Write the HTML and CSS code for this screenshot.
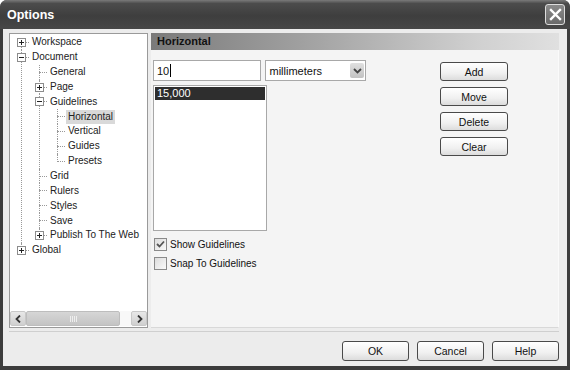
FILE: index.html
```html
<!DOCTYPE html>
<html>
<head>
    <link rel="stylesheet" href="styles.css">
</head>
<body>
    <div class="window">
        <div class="titlebar">
            <span class="title">Options</span>
            <span class="close">
                <svg width="13" height="13" viewBox="0 0 13 13"><path d="M2 2 L11 11 M11 2 L2 11" stroke="#fff" stroke-width="2.4" stroke-linecap="square"/></svg>
            </span>
        </div>
        <div class="client">
            <div class="main">
                <div class="tree">
                    <div class="tree-list">
                        <ul>
                            <li><div class="node"><span class="box plus"></span><span class="lbl">Workspace</span></div></li>
                            <li><div class="node"><span class="box"></span><span class="lbl">Document</span></div>
                                <ul>
                                    <li><div class="node"><span class="lbl">General</span></div></li>
                                    <li><div class="node"><span class="box plus"></span><span class="lbl">Page</span></div></li>
                                    <li><div class="node"><span class="box"></span><span class="lbl">Guidelines</span></div>
                                        <ul>
                                            <li><div class="node"><span class="lbl selected">Horizontal</span></div></li>
                                            <li><div class="node"><span class="lbl">Vertical</span></div></li>
                                            <li><div class="node"><span class="lbl">Guides</span></div></li>
                                            <li><div class="node"><span class="lbl">Presets</span></div></li>
                                        </ul>
                                    </li>
                                    <li><div class="node"><span class="lbl">Grid</span></div></li>
                                    <li><div class="node"><span class="lbl">Rulers</span></div></li>
                                    <li><div class="node"><span class="lbl">Styles</span></div></li>
                                    <li><div class="node"><span class="lbl">Save</span></div></li>
                                    <li><div class="node"><span class="box plus"></span><span class="lbl">Publish To The Web</span></div></li>
                                </ul>
                            </li>
                            <li><div class="node"><span class="box plus"></span><span class="lbl">Global</span></div></li>
                        </ul>
                    </div>
                    <div class="hscroll">
                        <span class="sbtn"><svg width="7" height="8" viewBox="0 0 7 8"><path d="M5 0.5 L1.5 4 L5 7.5" fill="none" stroke="#333" stroke-width="1.8"/></svg></span>
                        <span class="thumb"><span class="grip"></span></span>
                        <span class="track"></span>
                        <span class="sbtn"><svg width="7" height="8" viewBox="0 0 7 8"><path d="M2 0.5 L5.5 4 L2 7.5" fill="none" stroke="#333" stroke-width="1.8"/></svg></span>
                    </div>
                </div>
                <div class="panel">
                    <div class="panel-head">Horizontal</div>
                    <div class="panel-body">
                        <div class="fields">
                            <div class="row1">
                                <div class="textbox">10<span class="caret"></span></div>
                                <div class="select">millimeters
                                    <span class="dd"><svg width="9" height="6" viewBox="0 0 9 6"><path d="M1 1 L4.5 4.5 L8 1" fill="none" stroke="#444" stroke-width="1.8"/></svg></span>
                                </div>
                            </div>
                            <div class="listbox">
                                <div class="item selected-item">15,000</div>
                            </div>
                            <div class="check"><span class="cb"><svg width="11" height="11" viewBox="0 0 11 11"><path d="M2 5 L4.5 7.5 L9 2.5" fill="none" stroke="#555" stroke-width="1.8"/></svg></span>Show Guidelines</div>
                            <div class="check"><span class="cb"></span>Snap To Guidelines</div>
                        </div>
                        <div class="actions">
                            <button class="btn">Add</button>
                            <button class="btn">Move</button>
                            <button class="btn">Delete</button>
                            <button class="btn">Clear</button>
                        </div>
                    </div>
                </div>
            </div>
            <div class="footer">
                <button class="btn wide">OK</button>
                <button class="btn wide">Cancel</button>
                <button class="btn wide">Help</button>
            </div>
        </div>
    </div>
</body>
</html>
```

FILE: styles.css
```css
body
{
    margin: 0;
    background: #fff;
    font-family: "Liberation Sans", Arial, sans-serif;
    font-size: 10px;
    color: #111;
}
.window
{
    width: 570px;
    height: 370px;
    display: flex;
    flex-direction: column;
    background: #3c3c3c;
    border-radius: 7px 7px 0 0;
}
.titlebar
{
    height: 29px;
    display: flex;
    align-items: center;
    justify-content: space-between;
    padding: 0 5px 0 7px;
    border-radius: 7px 7px 0 0;
    background: linear-gradient(#7a7a7a, #4c4c4c 12%, #3e3e3e 55%, #474747);
}
.title
{
    color: #fff;
    font-weight: bold;
    font-size: 12.5px;
    margin-top: 1px;
}
.close
{
    width: 18px;
    height: 19px;
    border: 1px solid #ddd;
    border-radius: 3px;
    background: linear-gradient(#8a8a8a, #6a6a6a);
    display: flex;
    align-items: center;
    justify-content: center;
}
.client
{
    flex: 1;
    margin: 0 3px 4px 3px;
    background: #ececec;
    padding: 4px 8px 0 6px;
    display: flex;
    flex-direction: column;
}
.main
{
    display: flex;
    gap: 3px;
    height: 295px;
}
.tree
{
    width: 137px;
    border: 1px solid #9a9a9a;
    background: #fff;
    display: flex;
    flex-direction: column;
}
.tree-list
{
    flex: 1;
    padding: 1px 0 0 11px;
}
.tree ul
{
    list-style: none;
    margin: 0;
    padding: 0;
}
.tree ul ul
{
    margin-left: 18px;
}
.tree li
{
    position: relative;
}
.tree li::before
{
    content: '';
    position: absolute;
    left: 0;
    top: 7px;
    width: 8px;
    border-top: 1px dotted #999;
}
.tree li::after
{
    content: '';
    position: absolute;
    left: 0;
    top: 0;
    bottom: 0;
    border-left: 1px dotted #999;
}
.tree li:last-child::after
{
    bottom: auto;
    height: 8px;
}
.tree-list > ul > li:first-child::after
{
    top: 7px;
}
.node
{
    height: 14.85px;
    display: flex;
    align-items: center;
    position: relative;
}
.lbl
{
    margin-left: 9px;
    padding: 0 2px;
    line-height: 14px;
    color: #222;
}
.selected
{
    background: #d9d9d9;
}
.box
{
    position: absolute;
    left: -4px;
    top: 3px;
    width: 7px;
    height: 7px;
    border: 1px solid #8c8c8c;
    z-index: 1;
    background: linear-gradient(#222, #222) center / 5px 1px no-repeat, #fff;
}
.box.plus
{
    background: linear-gradient(#222, #222) center / 5px 1px no-repeat, linear-gradient(#222, #222) center / 1px 5px no-repeat, #fff;
}
.hscroll
{
    height: 15px;
    margin: 0 0 1px 0;
    display: flex;
}
.sbtn
{
    width: 14px;
    border: 1px solid #c8c8c8;
    border-radius: 2px;
    background: linear-gradient(#e8e8e8, #cfcfcf);
    display: flex;
    align-items: center;
    justify-content: center;
}
.thumb
{
    width: 92px;
    border: 1px solid #bdbdbd;
    border-radius: 2px;
    background: linear-gradient(#d6d6d6, #c4c4c4);
    display: flex;
    align-items: center;
    justify-content: center;
}
.grip
{
    width: 7px;
    height: 6px;
    background: repeating-linear-gradient(90deg, #eee 0 1px, transparent 1px 2px);
}
.track
{
    flex: 1;
    background: #f8f8f8;
}
.panel
{
    flex: 1;
    display: flex;
    flex-direction: column;
}
.panel-head
{
    height: 17px;
    line-height: 17px;
    padding-left: 6px;
    font-weight: bold;
    font-size: 11px;
    color: #111;
    background: linear-gradient(90deg, #7a7a7a, #9e9e9e 35%, #d0d0d0 80%, #e0e0e0);
}
.panel-body
{
    flex: 1;
    display: flex;
    background: #f4f4f4;
    padding: 10px 0 0 2px;
    border-right: 1px solid #fafafa;
    border-bottom: 1px solid #d8d8d8;
}
.fields
{
    display: flex;
    flex-direction: column;
    width: 213px;
}
.row1
{
    display: flex;
    gap: 4px;
}
.textbox
{
    width: 104px;
    height: 19px;
    border: 1px solid #a8a8a8;
    background: #fff;
    padding-left: 3px;
    display: flex;
    align-items: center;
    font-size: 11px;
}
.caret
{
    width: 1px;
    height: 13px;
    background: #000;
    margin-left: 1px;
}
.select
{
    width: 96px;
    height: 19px;
    border: 1px solid #a8a8a8;
    background: #fff;
    padding-left: 3px;
    display: flex;
    align-items: center;
    justify-content: space-between;
    font-size: 11px;
}
.dd
{
    width: 14px;
    height: 15px;
    margin-right: 1px;
    border-radius: 2px;
    background: linear-gradient(#e0e0e0, #c2c2c2);
    display: flex;
    align-items: center;
    justify-content: center;
}
.listbox
{
    width: 110px;
    height: 142px;
    margin-top: 4px;
    border: 1px solid #a8a8a8;
    background: #fff;
    padding: 1px;
}
.item
{
    height: 13px;
    line-height: 13px;
    padding-left: 2px;
    font-size: 11px;
}
.selected-item
{
    background: #2e2e2e;
    color: #fff;
}
.check
{
    display: flex;
    align-items: center;
    gap: 3px;
    height: 13px;
    margin-top: 7px;
}
.check + .check
{
    margin-top: 6px;
}
.cb
{
    width: 11px;
    height: 11px;
    margin-left: 1px;
    border: 1px solid #8a8a8a;
    background: linear-gradient(135deg, #dcdcdc, #fafafa);
    display: flex;
    align-items: center;
    justify-content: center;
}
.actions
{
    margin-left: 74px;
    padding-top: 2px;
    display: flex;
    flex-direction: column;
    gap: 6px;
}
.btn
{
    width: 68px;
    height: 19px;
    padding: 0;
    border: 1px solid #4a4a4a;
    border-radius: 3px;
    background: linear-gradient(#ffffff, #f0f0f0 60%, #dcdcdc);
    font-family: "Liberation Sans", Arial, sans-serif;
    font-size: 10.5px;
    color: #111;
}
.footer
{
    margin-top: 3px;
    border-top: 1px solid #cfcfcf;
    display: flex;
    justify-content: flex-end;
    gap: 8px;
    padding: 9px 0 0 0;
}
.btn.wide
{
    width: 67px;
    height: 20px;
}
```
